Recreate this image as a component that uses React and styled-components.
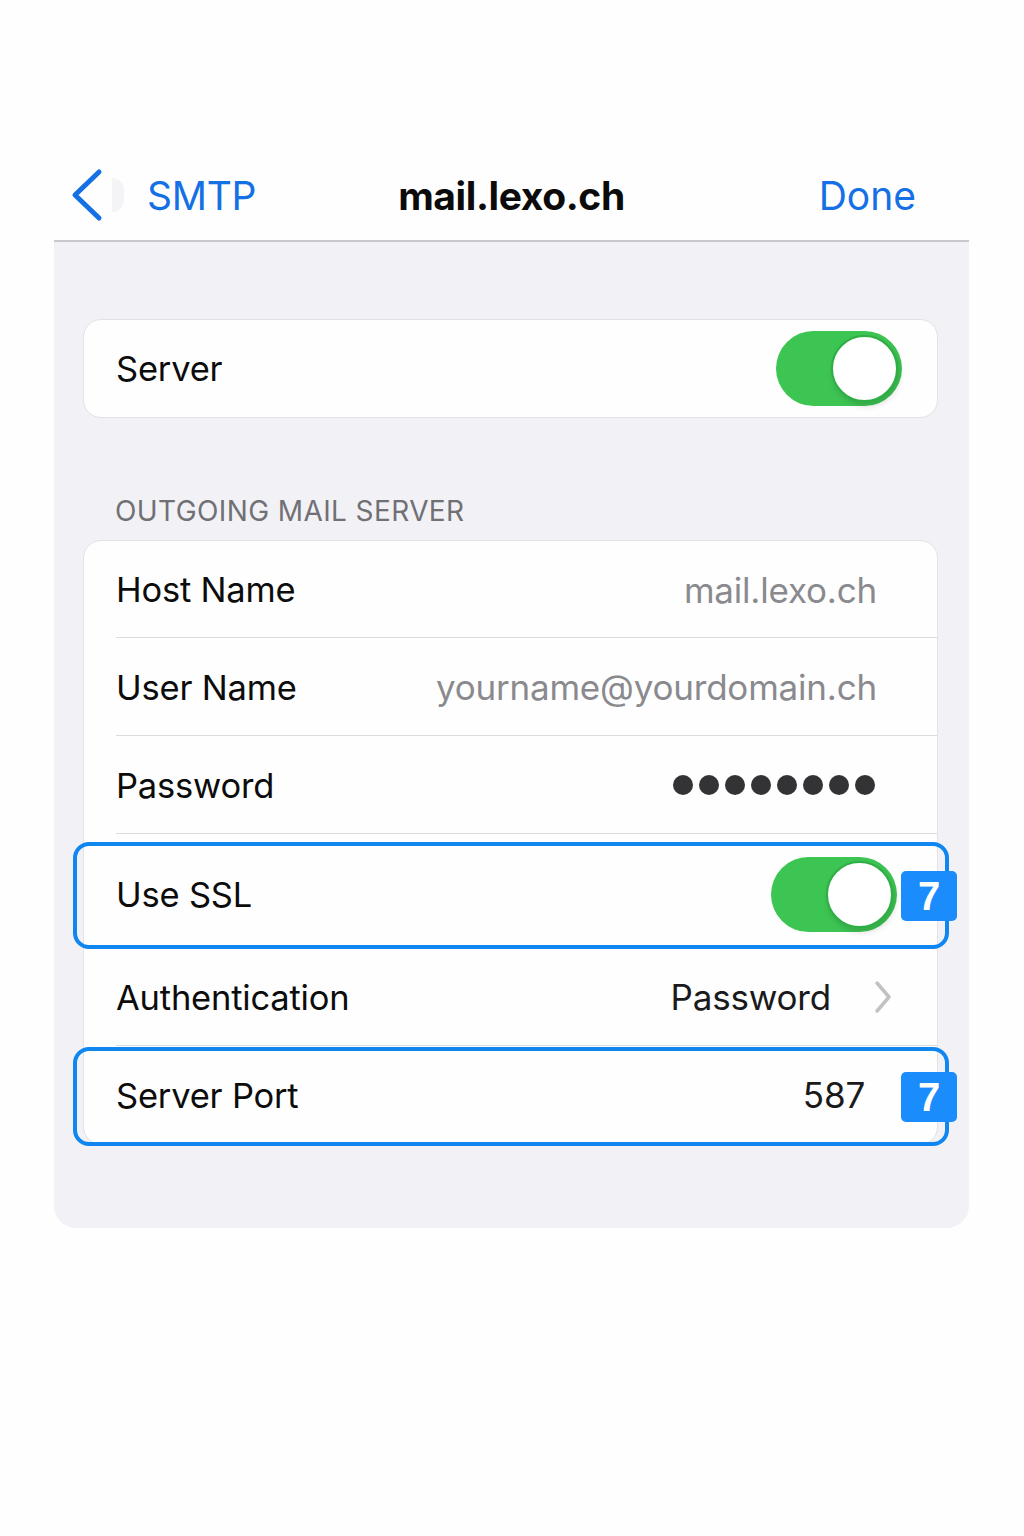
import React from "react";
import styled, { createGlobalStyle } from "styled-components";

const GlobalStyle = createGlobalStyle`
  body {
    margin: 0;
    background: #fefefe;
    font-family: Inter, "Noto Sans", "Liberation Sans", sans-serif;
    -webkit-font-smoothing: antialiased;
  }
`;

const Page = styled.div`
  width: 1024px;
  height: 1536px;
  padding-top: 150px;
  box-sizing: border-box;
`;

const Sheet = styled.div`
  width: 915px;
  margin-left: 54px;
`;

const NavBar = styled.div`
  height: 92px;
  display: grid;
  grid-template-columns: 1fr auto 1fr;
  align-items: center;
  background: #fefefe;
  border-bottom: 2px solid #c9c9cd;
  box-sizing: border-box;
`;

const BackButton = styled.div`
  display: flex;
  align-items: center;
  padding-left: 16px;
  color: #1470e4;
  font-size: 39px;
  letter-spacing: -0.3px;
`;

const Ghost = styled.span`
  width: 12px;
  height: 34px;
  margin: 0 23px 0 8px;
  border-radius: 0 17px 17px 0;
  background: #f4f4f6;
`;

const Title = styled.div`
  font-size: 39px;
  font-weight: 700;
  color: #0b0b0c;
  letter-spacing: -0.4px;
`;

const DoneButton = styled.div`
  justify-self: end;
  padding-right: 53px;
  color: #1470e4;
  font-size: 39px;
`;

const Panel = styled.div`
  background: #f2f2f6;
  border-radius: 0 0 22px 22px;
  padding: 77px 31px 83px 29px;
`;

const Card = styled.div`
  background: #fefefe;
  border: 1.5px solid #e2e2e6;
  border-radius: 18px;
  position: relative;
`;

const SectionHeader = styled.div`
  margin: 77px 0 13px 32px;
  font-size: 28px;
  line-height: 32px;
  color: #707075;
  letter-spacing: 0.4px;
`;

const Row = styled.div`
  position: relative;
  height: ${(p) => p.h}px;
  display: flex;
  align-items: center;
  padding: ${(p) => p.pt || 0}px ${(p) => p.pr}px 0 32px;
  box-sizing: border-box;

  &::before {
    content: "";
    display: ${(p) => (p.last ? "none" : "block")};
    position: absolute;
    left: 32px;
    right: 0;
    bottom: 0;
    border-bottom: 1.5px solid #dcdce0;
  }
`;

const Highlight = styled.div`
  position: absolute;
  top: ${(p) => p.top}px;
  bottom: ${(p) => p.bottom}px;
  left: -11px;
  right: -12px;
  border: 4px solid #0f86f0;
  border-radius: 16px;
  pointer-events: none;
`;

const Label = styled.span`
  flex: 1;
  font-size: 34.5px;
  color: #0c0c0d;
  letter-spacing: -0.2px;
`;

const Value = styled.span`
  font-size: 35px;
  color: ${(p) => (p.muted ? "#8a8a8e" : "#1a1a1c")};
  letter-spacing: -0.2px;
`;

const Dots = styled.div`
  display: flex;
  gap: 6px;
  margin-right: 2px;
`;

const Dot = styled.span`
  width: 20px;
  height: 20px;
  border-radius: 50%;
  background: #333335;
`;

const Toggle = styled.div`
  position: relative;
  width: 126px;
  height: 75px;
  border-radius: 38px;
  background: #3dc553;
`;

const Knob = styled.span`
  position: absolute;
  top: 4px;
  right: 4px;
  width: 67px;
  height: 67px;
  box-sizing: border-box;
  border-radius: 50%;
  background: #fff;
  border: 2px solid #2fae45;
  box-shadow: 2px 4px 6px rgba(0, 0, 0, 0.15);
`;

const Badge = styled.div`
  position: absolute;
  right: -20px;
  top: 50%;
  margin-top: ${(p) => p.shift}px;
  width: 56px;
  height: 50px;
  border-radius: 5px;
  background: #1a8cfb;
  color: #fff;
  font-size: 40px;
  font-weight: 700;
  display: flex;
  align-items: center;
  justify-content: center;
  font-family: "Liberation Sans", Arial, sans-serif;
`;

const Chevron = () => (
  <svg width="20" height="34" viewBox="0 0 20 34" style={{ marginLeft: 42 }}>
    <path d="M4 3 L16 17 L4 31" fill="none" stroke="#c2c2c6" strokeWidth="3.5" strokeLinecap="round" strokeLinejoin="round" />
  </svg>
);

const BackArrow = () => (
  <svg width="34" height="54" viewBox="0 0 34 54">
    <path d="M29 4 L5 27 L29 50" fill="none" stroke="#1470e4" strokeWidth="5" strokeLinecap="round" strokeLinejoin="round" />
  </svg>
);

const Switch = () => (
  <Toggle>
    <Knob />
  </Toggle>
);

export default function App() {
  return (
    <Page>
      <GlobalStyle />
      <Sheet>
        <NavBar>
          <BackButton>
            <BackArrow />
            <Ghost />
            SMTP
          </BackButton>
          <Title>mail.lexo.ch</Title>
          <DoneButton>Done</DoneButton>
        </NavBar>
        <Panel>
          <Card>
            <Row h={97} pr={35} last>
              <Label>Server</Label>
              <Switch />
            </Row>
          </Card>
          <SectionHeader>OUTGOING MAIL SERVER</SectionHeader>
          <Card>
            <Row h={97} pr={60}>
              <Label>Host Name</Label>
              <Value muted>mail.lexo.ch</Value>
            </Row>
            <Row h={98} pr={60}>
              <Label>User Name</Label>
              <Value muted>yourname@yourdomain.ch</Value>
            </Row>
            <Row h={98} pr={60}>
              <Label>Password</Label>
              <Dots>
                {Array.from({ length: 8 }).map((_, i) => (
                  <Dot key={i} />
                ))}
              </Dots>
            </Row>
            <Row h={114} pr={40} pt={6}>
              <Label>Use SSL</Label>
              <Switch />
              <Highlight top={8} bottom={-1} />
              <Badge shift={-20}>7</Badge>
            </Row>
            <Row h={98} pr={44}>
              <Label>Authentication</Label>
              <Value>Password</Value>
              <Chevron />
            </Row>
            <Row h={98} pr={72} last>
              <Label>Server Port</Label>
              <Value>587</Value>
              <Highlight top={1} bottom={-2} />
              <Badge shift={-23}>7</Badge>
            </Row>
          </Card>
        </Panel>
      </Sheet>
    </Page>
  );
}
